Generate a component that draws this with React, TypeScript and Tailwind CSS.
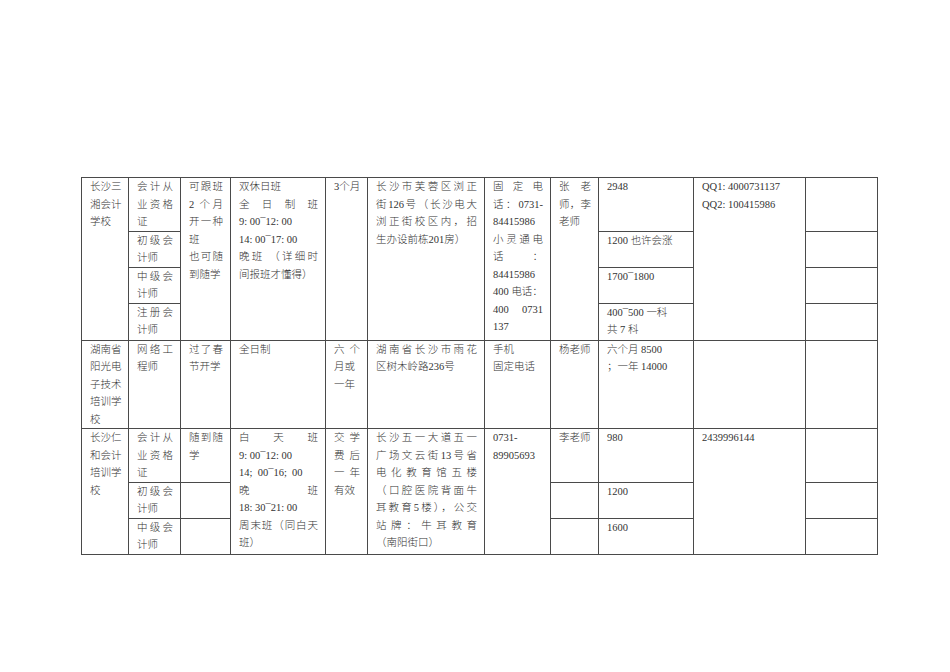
import React from 'react';

// "|" at the start of a line = line is justified across the cell (Word-style distributed text)
type CellProps = {
  lines?: string[];
  rowSpan?: number;
};

function Cell({ lines = [], rowSpan }: CellProps) {
  return (
    <td rowSpan={rowSpan} className="border border-[#4a4a4a] align-top pl-[8px] pr-[7px] py-0">
      {lines.map((l, i) =>
        l.startsWith('|') ? (
          <div key={i} className="whitespace-nowrap [text-align-last:justify] text-justify">
            {l.slice(1)}
          </div>
        ) : (
          <div key={i} className="whitespace-nowrap">
            {l}
          </div>
        )
      )}
    </td>
  );
}

const widths = ['w-[47px]', 'w-[52px]', 'w-[50px]', 'w-[95px]', 'w-[42px]', 'w-[117px]', 'w-[66px]', 'w-[48px]', 'w-[95px]', 'w-[112px]', 'w-[72px]'];

export default function App() {
  return (
    <div className="min-h-screen w-[950px] bg-white pt-[177px] pl-[81px] text-[#333] font-light text-[10.5px] leading-[17.5px] font-['Liberation_Serif','Noto_Sans_CJK_SC',serif]">
      <table className="table-fixed border-collapse w-[796px]">
        <colgroup>
          {widths.map((w, i) => (
            <col key={i} className={w} />
          ))}
        </colgroup>
        <tbody>
          {/* 长沙三湘会计学校 */}
          <tr className="h-[53px]">
            <Cell rowSpan={4} lines={['|长沙三', '|湘会计', '学校']} />
            <Cell lines={['|会计从', '|业资格', '证']} />
            <Cell rowSpan={4} lines={['|可跟班', '|2 个月', '|开一种', '班', '|也可随', '到随学']} />
            <Cell
              rowSpan={4}
              lines={['双休日班', '|全日制班', '9: 00¯12: 00', '14: 00¯17: 00', '|晚班 （详细时', '间报班才懂得）']}
            />
            <Cell rowSpan={4} lines={['3个月']} />
            <Cell
              rowSpan={4}
              lines={['|长沙市芙蓉区浏正', '|街126号（长沙电大', '|浏正街校区内，招', '生办设前栋201房）']}
            />
            <Cell
              rowSpan={4}
              lines={['|固定电', '|话：0731-', '84415986', '|小灵通电', '|话：', '84415986', '400 电话：', '|400 0731', '137']}
            />
            <Cell rowSpan={4} lines={['|张老', '|师，李', '老师']} />
            <Cell lines={['2948']} />
            <Cell rowSpan={4} lines={['QQ1: 4000731137', 'QQ2: 100415986']} />
            <Cell />
          </tr>
          <tr className="h-[36px]">
            <Cell lines={['|初级会', '计师']} />
            <Cell lines={['1200 也许会涨']} />
            <Cell />
          </tr>
          <tr className="h-[36px]">
            <Cell lines={['|中级会', '计师']} />
            <Cell lines={['1700¯1800']} />
            <Cell />
          </tr>
          <tr className="h-[37px]">
            <Cell lines={['|注册会', '计师']} />
            <Cell lines={['400¯500 一科', '共 7 科']} />
            <Cell />
          </tr>

          {/* 湖南省阳光电子技术培训学校 */}
          <tr className="h-[88px]">
            <Cell lines={['|湖南省', '|阳光电', '|子技术', '|培训学', '校']} />
            <Cell lines={['|网络工', '程师']} />
            <Cell lines={['|过了春', '节开学']} />
            <Cell lines={['全日制']} />
            <Cell lines={['|六个', '月或', '一年']} />
            <Cell lines={['|湖南省长沙市雨花', '区树木岭路236号']} />
            <Cell lines={['手机', '固定电话']} />
            <Cell lines={['杨老师']} />
            <Cell lines={['六个月 8500', '；一年 14000']} />
            <Cell />
            <Cell />
          </tr>

          {/* 长沙仁和会计培训学校 */}
          <tr className="h-[53px]">
            <Cell rowSpan={3} lines={['|长沙仁', '|和会计', '|培训学', '校']} />
            <Cell lines={['|会计从', '|业资格', '证']} />
            <Cell lines={['|随到随', '学']} />
            <Cell
              rowSpan={3}
              lines={['|白天班', '9: 00¯12: 00', '14;\u00a0 00¯16;\u00a0 00', '|晚班', '18: 30¯21: 00', '|周末班（同白天', '班）']}
            />
            <Cell rowSpan={3} lines={['|交学', '|费后', '|一年', '有效']} />
            <Cell
              rowSpan={3}
              lines={[
                '|长沙五一大道五一',
                '|广场文云街13号省',
                '|电化教育馆五楼',
                '|（口腔医院背面牛',
                '|耳教育5楼），公交',
                '|站牌：牛耳教育',
                '（南阳街口）',
              ]}
            />
            <Cell rowSpan={3} lines={['0731-', '89905693']} />
            <Cell lines={['李老师']} />
            <Cell lines={['980']} />
            <Cell rowSpan={3} lines={['2439996144']} />
            <Cell />
          </tr>
          <tr className="h-[36px]">
            <Cell lines={['|初级会', '计师']} />
            <Cell />
            <Cell />
            <Cell lines={['1200']} />
            <Cell />
          </tr>
          <tr className="h-[35px]">
            <Cell lines={['|中级会', '计师']} />
            <Cell />
            <Cell />
            <Cell lines={['1600']} />
            <Cell />
          </tr>
        </tbody>
      </table>
    </div>
  );
}
